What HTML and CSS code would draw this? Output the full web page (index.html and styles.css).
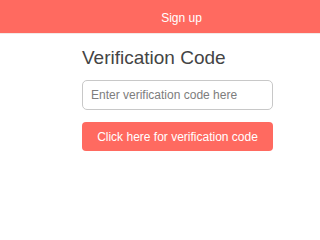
FILE: index.html
```html
<!DOCTYPE html>
<html>
<head>
<meta charset="utf-8">
<link rel="stylesheet" href="styles.css">
</head>
<body>
<header class="topbar"><div class="topbar-inner"><span class="topbar-title">Sign up</span></div></header>
<main class="content">
  <h1 class="title">Verification Code</h1>
  <input class="code-input" type="text" placeholder="Enter verification code here">
  <button class="verify-btn" type="button">Click here for verification code</button>
</main>
</body>
</html>
```
FILE: styles.css
```css
html, body {
  margin: 0;
  padding: 0;
  background: #ffffff;
  font-family: "Liberation Sans", Arial, sans-serif;
}
.topbar {
  height: 33px;
  background: #ff6a60;
  border-bottom: 1px solid #f3e9e6;
}
.topbar-inner {
  width: 191px;
  height: 100%;
  margin-left: 82px;
  padding-left: 8px;
  box-sizing: border-box;
  display: flex;
  align-items: center;
  justify-content: center;
}
.topbar-title {
  color: #ffffff;
  font-size: 12px;
  margin-top: 2px;
}
.content {
  display: flex;
  flex-direction: column;
  width: 191px;
  margin-left: 82px;
}
.title {
  margin: 13px 0 0 0;
  font-size: 19px;
  line-height: 22px;
  font-weight: normal;
  color: #444444;
  white-space: nowrap;
}
.code-input {
  box-sizing: border-box;
  margin-top: 11px;
  height: 30px;
  border: 1px solid #c8c8c8;
  border-radius: 5px;
  padding: 0 8px;
  font-family: "Liberation Sans", Arial, sans-serif;
  font-size: 12px;
  color: #333;
  outline: none;
}
.code-input::placeholder {
  color: #7d7d7d;
}
.verify-btn {
  box-sizing: border-box;
  margin-top: 12px;
  height: 29px;
  border: none;
  border-radius: 4px;
  background: #ff6a60;
  color: #ffffff;
  font-family: "Liberation Sans", Arial, sans-serif;
  font-size: 12px;
  padding: 0;
}
```
